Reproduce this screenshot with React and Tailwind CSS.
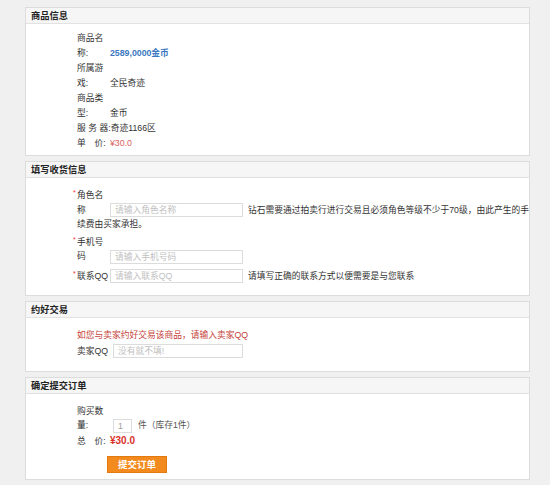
function Panel({ title, children, className = "" }) {
  return (
    <div className="border border-[#dcdcdc] bg-white">
      <div className="h-[16px] leading-[16px] bg-[#f6f6f6] border-b border-[#e2e2e2] pl-[5px] font-bold text-[9.25px] text-[#222]">
        {title}
      </div>
      <div className={"pl-[51px] " + className}>{children}</div>
    </div>
  );
}

function Field({ width, placeholder, value }) {
  return (
    <input
      readOnly
      placeholder={placeholder}
      defaultValue={value}
      className="shrink-0 h-[14px] border border-[#dcdcdc] bg-white px-[4px] text-[8.75px] leading-[12px] text-[#999] placeholder:text-[#c0c0c0] outline-none"
      style={{ width }}
    />
  );
}

function Star() {
  return (
    <span className="inline-block w-[4px] -ml-[4px] align-top text-[7px] leading-[10px] text-[#e33]">*</span>
  );
}

export default function App() {
  return (
    <div className="min-h-[485px] bg-[#f0f0f0] pt-[7px] pl-[25px] font-['Liberation_Sans','Noto_Sans_CJK_SC',sans-serif] text-[8.75px] text-[#333]">
      <div className="flex w-[505px] flex-col gap-[5px]">
        <Panel title="商品信息" className="pt-[7px] pb-[4px] leading-[15px]">
          <div className="flex items-end">
            <div className="w-[33px] shrink-0">商品名<br />称:</div>
            <span className="font-bold text-[#3b78c0]">2589,0000金币</span>
          </div>
          <div className="flex items-end">
            <div className="w-[33px] shrink-0">所属游<br />戏:</div>
            <span>全民奇迹</span>
          </div>
          <div className="flex items-end">
            <div className="w-[33px] shrink-0">商品类<br />型:</div>
            <span>金币</span>
          </div>
          <div>
            <span className="tracking-[2.5px]">服务</span>器:奇迹1166区
          </div>
          <div className="flex items-end">
            <div className="w-[33px] shrink-0">单　价:</div>
            <span className="text-[#d9605c]">¥30.0</span>
          </div>
        </Panel>

        <Panel title="填写收货信息" className="pt-[10px] pb-[12px] leading-[14.5px]">
          <div className="flex items-end">
            <div className="w-[33px] shrink-0"><Star />角色名<br />称</div>
            <Field width={133} placeholder="请输入角色名称" />
            <span className="ml-[5px] whitespace-nowrap">钻石需要通过拍卖行进行交易且必须角色等级不少于70级，由此产生的手</span>
          </div>
          <div>续费由买家承担。</div>
          <div className="mt-[3px] flex items-end">
            <div className="w-[33px] shrink-0"><Star />手机号<br />码</div>
            <Field width={133} placeholder="请输入手机号码" />
          </div>
          <div className="mt-[5px] flex items-end">
            <div className="w-[33px] shrink-0 whitespace-nowrap"><Star />联系QQ</div>
            <Field width={133} placeholder="请输入联系QQ" />
            <span className="ml-[5px] whitespace-nowrap">请填写正确的联系方式以便需要是与您联系</span>
          </div>
        </Panel>

        <Panel title="约好交易" className="pt-[10px] pb-[12px] leading-[14.5px]">
          <div className="text-[#c6433b]">如您与卖家约好交易该商品，请输入卖家QQ</div>
          <div className="mt-[1.5px] flex items-center">
            <div className="w-[36px] shrink-0">卖家QQ</div>
            <Field width={130} placeholder="没有就不填!" />
          </div>
        </Panel>

        <Panel title="确定提交订单" className="pt-[10px] pb-[6px] leading-[14.5px]">
          <div className="flex items-end">
            <div className="w-[36px] shrink-0">购买数<br />量:</div>
            <Field width={19} value="1" />
            <span className="ml-[6px] text-[#555]">件（库存1件）</span>
          </div>
          <div className="mt-[1.5px] flex items-end">
            <div className="w-[33px] shrink-0">总　价:</div>
            <span className="text-[10px] font-bold text-[#d8322c]">¥30.0</span>
          </div>
          <button className="ml-[30px] mt-[7px] block h-[17px] w-[60px] border border-[#e27a12] bg-[#f38a1d] text-[9.5px] font-bold leading-[15px] text-white">
            提交订单
          </button>
        </Panel>
      </div>
    </div>
  );
}
